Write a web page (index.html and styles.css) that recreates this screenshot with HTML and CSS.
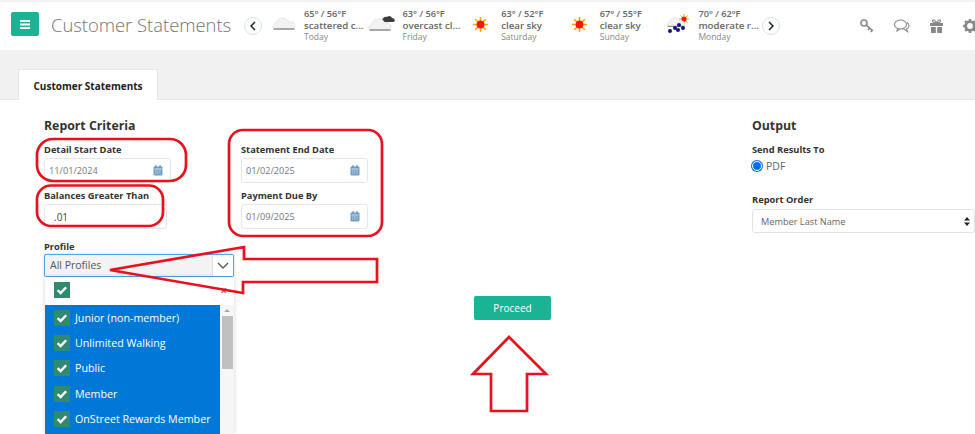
FILE: index.html
```html
<!DOCTYPE html>
<html lang="en">
<head>
<meta charset="utf-8">
<title>Customer Statements</title>
<link rel="stylesheet" href="styles.css">
</head>
<body>
<svg width="0" height="0" class="defs">
  <defs>
    <symbol id="sun" viewBox="0 0 16 16">
      <g stroke="#ffa000" stroke-width="1.6">
        <path d="M8 0v4M8 12v4M0 8h4M12 8h4M2.3 2.3l2.8 2.8M10.9 10.9l2.8 2.8M13.7 2.3l-2.8 2.8M5.1 10.9l-2.8 2.8"/>
      </g>
      <circle cx="8" cy="8" r="4.2" fill="#f01a0a"/>
    </symbol>
    <symbol id="cloud" viewBox="0 0 24 14">
      <path d="M3 12c-3 0-3-5 .5-5C4 3 8 1 11 1c3 0 5 2 6 4 3-1 6 1 6 4 0 2-1 3-3 3z" fill="#f2f2f2" stroke="#dedede" stroke-width=".7"/>
      <path d="M2 12h20" stroke="#8f8f8f" stroke-width="1.6" stroke-linecap="round"/>
    </symbol>
    <symbol id="cal" viewBox="0 0 10 11">
      <rect x=".5" y="1.5" width="9" height="9" rx="1" fill="#6f9fc4"/>
      <path d="M1.5 4h7" stroke="#fff" stroke-width=".7"/>
      <path d="M2 6h6M2 8h6" stroke="#c8dcea" stroke-width=".9" stroke-dasharray="1.2 .6"/>
      <path d="M3 0v2.4M7 0v2.4" stroke="#4f7fa5" stroke-width="1"/>
    </symbol>
    <symbol id="chk" viewBox="0 0 15 15">
      <rect width="15" height="15" fill="#2f8a70"/>
      <path d="M3.4 7.6l2.8 2.7 5.2-5.4" fill="none" stroke="#fff" stroke-width="2.2"/>
    </symbol>
  </defs>
</svg>

<header class="topbar">
  <button class="menu-btn" type="button" aria-label="Menu">
    <svg width="10" height="9" viewBox="0 0 10 9"><path d="M0 1h10M0 4.500h10M0 8h10" stroke="#fff" stroke-width="1.800"/></svg>
  </button>
  <h1 class="page-title">Customer Statements</h1>
  <span class="circle-btn"><svg width="6" height="10" viewBox="0 0 6 10"><path d="M5 1L1 5l4 4" fill="none" stroke="#222" stroke-width="1.500"/></svg></span>
  <div class="weather">
    <div class="wx">
      <span class="wx-icon"><svg width="24" height="14"><use href="#cloud"/></svg></span>
      <div class="wx-text"><div class="wx-temp">65° / 56°F</div><div class="wx-desc">scattered c...</div><div class="wx-day">Today</div></div>
    </div>
    <div class="wx">
      <span class="wx-icon"><svg width="29" height="18" viewBox="0 0 29 18"><path d="M14 6c0-3 3-5 5-4 2-2 4-1 5 1 3 0 4 4 1 4h-9c-1 0-2 0-2-1z" fill="#3d3d3d"/><use href="#cloud" x="0" y="3" width="24" height="14"/></svg></span>
      <div class="wx-text"><div class="wx-temp">63° / 56°F</div><div class="wx-desc">overcast cl...</div><div class="wx-day">Friday</div></div>
    </div>
    <div class="wx">
      <span class="wx-icon"><svg width="15" height="15"><use href="#sun"/></svg></span>
      <div class="wx-text"><div class="wx-temp">63° / 52°F</div><div class="wx-desc">clear sky</div><div class="wx-day">Saturday</div></div>
    </div>
    <div class="wx">
      <span class="wx-icon"><svg width="15" height="15"><use href="#sun"/></svg></span>
      <div class="wx-text"><div class="wx-temp">67° / 55°F</div><div class="wx-desc">clear sky</div><div class="wx-day">Sunday</div></div>
    </div>
    <div class="wx">
      <span class="wx-icon"><svg width="25" height="20" viewBox="0 0 25 20"><use href="#sun" x="14" y="0" width="10" height="10"/><use href="#cloud" x="0" y="3" width="22" height="11"/><g fill="#12128c"><circle cx="5" cy="17" r="2"/><circle cx="10" cy="14" r="2"/><circle cx="14" cy="11" r="2"/><circle cx="13" cy="16" r="2"/><circle cx="18" cy="14" r="2"/></g></svg></span>
      <div class="wx-text"><div class="wx-temp">70° / 62°F</div><div class="wx-desc">moderate r...</div><div class="wx-day">Monday</div></div>
    </div>
  </div>
  <span class="circle-btn"><svg width="6" height="10" viewBox="0 0 6 10"><path d="M1 1l4 4-4 4" fill="none" stroke="#222" stroke-width="1.500"/></svg></span>
  <div class="tools">
    <svg width="14" height="14" viewBox="0 0 14 14" fill="none" stroke="#888" stroke-width="1.600"><circle cx="4" cy="4" r="3"/><path d="M6.200 6.200l6.800 5.800M9.500 9.200l-1.500 1.800M12 11.400l-1.300 1.500"/></svg>
    <svg width="16" height="14" viewBox="0 0 16 14" fill="none" stroke="#888" stroke-width="1.100"><ellipse cx="6.500" cy="5.500" rx="6" ry="4.500"/><path d="M3.500 9.500L3 12l3-2.200"/><path d="M13 3.500c3 2 2.500 5.500-.5 6.500l1 2.500-3.500-2.500H8"/></svg>
    <svg width="13" height="14" viewBox="0 0 13 14" fill="#888"><rect x="0" y="4" width="13" height="3"/><rect x="1" y="8" width="4.800" height="6"/><rect x="7.200" y="8" width="4.800" height="6"/><path d="M6.500 4C5 .5 2.500 0 2.500 2c0 1.500 2 2 4 2zm0 0c1.500-3.500 4-4 4-2 0 1.500-2 2-4 2z" fill="none" stroke="#888" stroke-width="1.200"/></svg>
    <svg width="14" height="14" viewBox="0 0 14 14"><circle cx="7" cy="7" r="4.300" fill="none" stroke="#888" stroke-width="2.800"/><path d="M7 0v14M0 7h14M2 2l10 10M12 2L2 12" stroke="#888" stroke-width="2.400" stroke-dasharray="2.400 9.200"/></svg>
  </div>
</header>

<nav class="tabbar"><div class="tab">Customer Statements</div></nav>

<main class="content">
  <section class="col-left">
    <h2 class="section-title">Report Criteria</h2>
    <div class="field">
      <label class="lbl">Detail Start Date</label>
      <div class="input w-127"><span>11/01/2024</span><svg width="10" height="11"><use href="#cal"/></svg></div>
    </div>
    <div class="field">
      <label class="lbl">Balances Greater Than</label>
      <div class="input w-123 num"><span>.01</span></div>
    </div>
    <div class="field profile">
      <label class="lbl">Profile</label>
      <div class="combo"><span class="combo-val">All Profiles</span><span class="combo-arrow"><svg width="12" height="7" viewBox="0 0 12 7"><path d="M1 1l5 5 5-5" fill="none" stroke="#555" stroke-width="1.300"/></svg></span></div>
      <div class="dropdown">
        <div class="dd-head"><svg width="16" height="16"><use href="#chk"/></svg><span class="dd-close">×</span></div>
        <div class="dd-body">
          <ul class="dd-list">
            <li><svg width="16" height="16"><use href="#chk"/></svg>Junior (non-member)</li>
            <li><svg width="16" height="16"><use href="#chk"/></svg>Unlimited Walking</li>
            <li><svg width="16" height="16"><use href="#chk"/></svg>Public</li>
            <li><svg width="16" height="16"><use href="#chk"/></svg>Member</li>
            <li><svg width="16" height="16"><use href="#chk"/></svg>OnStreet Rewards Member</li>
          </ul>
          <div class="dd-scroll"><span class="dd-up"></span><span class="dd-thumb"></span></div>
        </div>
      </div>
    </div>
  </section>

  <section class="col-mid">
    <div class="field">
      <label class="lbl">Statement End Date</label>
      <div class="input w-127"><span>01/02/2025</span><svg width="10" height="11"><use href="#cal"/></svg></div>
    </div>
    <div class="field">
      <label class="lbl">Payment Due By</label>
      <div class="input w-127"><span>01/09/2025</span><svg width="10" height="11"><use href="#cal"/></svg></div>
    </div>
  </section>

  <section class="col-action">
    <button class="proceed" type="button">Proceed</button>
  </section>

  <section class="col-output">
    <h2 class="section-title">Output</h2>
    <label class="lbl">Send Results To</label>
    <div class="radio-row"><span class="radio"></span>PDF</div>
    <label class="lbl order-lbl">Report Order</label>
    <div class="select"><span>Member Last Name</span><svg width="6" height="9" viewBox="0 0 6 9"><path d="M3 0l3 3.500H0zM3 9L0 5.500h6z" fill="#222"/></svg></div>
  </section>
</main>

<svg class="marks" width="975" height="434" viewBox="0 0 975 434" fill="none" stroke="#e8111c" stroke-width="2.700">
  <rect x="37" y="139" width="149" height="42" rx="16"/>
  <rect x="37" y="185.500" width="126" height="40.500" rx="14"/>
  <rect x="229" y="130" width="153" height="106" rx="14"/>
  <path d="M110 270L244 247V259H377V282H243V293Z"/>
  <path d="M509 337L546 374H527V411H491V374H473Z"/>
</svg>
</body>
</html>
```
FILE: styles.css
```css
* { box-sizing: border-box; }
html, body { margin: 0; padding: 0; }
body {
  width: 975px;
  height: 434px;
  overflow: hidden;
  position: relative;
  background: #fff;
  font-family: "Open Sans", "Noto Sans", sans-serif;
  color: #333;
}
.defs { position: absolute; }

.topbar {
  margin-top: 2px;
  height: 48px;
  background: #fff;
  display: flex;
  align-items: center;
  padding-left: 11px;
  box-shadow: 0 -2px 0 #f3f3f3;
}
.topbar > * { flex: none; }
.menu-btn {
  width: 28px;
  height: 24px;
  padding: 0;
  border: 0;
  border-radius: 2px;
  margin-bottom: 4px;
  background: #1ab394;
  display: flex;
  align-items: center;
  justify-content: center;
}
.page-title {
  margin: 0 12px 4px 12px;
  width: 181px;
  font-size: 18.400px;
  font-weight: 300;
  color: #757575;
  white-space: nowrap;
}
.circle-btn {
  width: 18px;
  height: 18px;
  border: 1px solid #d5dfe8;
  border-radius: 50%;
  background: #fff;
  display: flex;
  align-items: center;
  justify-content: center;
  position: relative;
  z-index: 1;
}
.weather {
  display: flex;
  width: 493px;
  margin: 0 -2px 4px 9px;
}
.wx { width: 98.600px; flex: none; display: flex; align-items: center; }
.wx-icon { width: 25px; margin-right: 8px; flex: none; display: flex; justify-content: center; }
.wx-icon svg { display: block; flex: none; }
.wx-text { width: 60px; }
.wx-temp { font-size: 9.200px; font-weight: 600; color: #666; white-space: nowrap; line-height: 13px; }
.wx-desc { font-size: 9.700px; font-weight: 600; color: #666; white-space: nowrap; line-height: 12px; }
.wx-day { font-size: 8.500px; color: #888; line-height: 9px; }
.tools {
  margin-left: 80px;
  display: flex;
  align-items: center;
  gap: 20px;
}
.tools svg { display: block; flex: none; }

.tabbar {
  height: 50px;
  background: #f1f1f1;
  padding: 19px 0 0 18px;
  border-bottom: 1px solid #e4e6ea;
}
.tab {
  width: 140px;
  height: 31px;
  background: #fff;
  border: 1px solid #e6e7eb;
  border-bottom: 0;
  border-radius: 2px 2px 0 0;
  font-size: 10px;
  font-weight: 700;
  color: #222;
  text-align: center;
  line-height: 33px;
}

.content {
  display: grid;
  grid-template-columns: 197px 233px 278px 1fr;
  padding-left: 44px;
  height: 334px;
  overflow: hidden;
}
.section-title {
  margin: 17px 0 7px;
  height: 17px;
  font-size: 12.300px;
  font-weight: 700;
  line-height: 17px;
  color: #333;
}
.lbl {
  display: block;
  height: 17px;
  font-size: 9.300px;
  font-weight: 700;
  line-height: 17px;
  color: #333;
}
.field { margin-bottom: 4px; }
.input {
  height: 25px;
  border: 1px solid #e4e6ea;
  border-radius: 3px;
  padding: 0 7px 0 4px;
  font-size: 9.200px;
  color: #777;
  display: flex;
  align-items: center;
  justify-content: space-between;
}
.w-127 { width: 127px; }
.w-123 { width: 123px; }
.num { padding-left: 9px; color: #444; font-size: 10px; }
.profile { margin-top: 9px; margin-bottom: 0; }
.profile .lbl { height: 16px; }
.combo {
  width: 190px;
  height: 23px;
  border: 1px solid #4da6f0;
  box-shadow: 0 0 2px #8cc4ef;
  border-radius: 2px;
  background: #f3f3f3;
  display: flex;
  font-size: 10.500px;
  color: #555;
}
.combo-val { flex: 1; padding-left: 5px; line-height: 21px; }
.combo-arrow {
  width: 21px;
  background: #fff;
  border-left: 1px solid #ddd;
  display: flex;
  align-items: center;
  justify-content: center;
}
.dropdown {
  width: 189px;
  margin-left: 1px;
  background: #fff;
  box-shadow: 0 0 4px rgba(0, 0, 0, .18);
}
.dd-head {
  height: 28px;
  display: flex;
  align-items: flex-start;
  justify-content: space-between;
  padding: 5px 7px 0 9px;
}
.dd-close { font-size: 12px; font-weight: 700; line-height: 12px; color: #777; margin-top: 3px; }
.dd-head svg, .dd-list svg { display: block; flex: none; }
.dd-body { display: flex; height: 129px; }
.dd-list {
  list-style: none;
  margin: 0;
  padding: 0 0 0 9px;
  width: 175px;
  background: #0078d7;
  color: #fff;
  font-size: 10.700px;
}
.dd-list li {
  height: 25.300px;
  display: flex;
  align-items: center;
  gap: 5px;
  white-space: nowrap;
}
.dd-scroll {
  width: 14px;
  background: #f6f6f6;
  display: flex;
  flex-direction: column;
  align-items: center;
  padding-top: 4px;
}
.dd-up {
  width: 0;
  height: 0;
  border: 3px solid transparent;
  border-top: 0;
  border-bottom: 3px solid #aaa;
}
.dd-thumb { width: 11px; height: 53px; margin-top: 4px; background: #c0c0c0; }

.col-mid { padding-top: 41px; }
.col-action { padding-top: 196px; }
.proceed {
  display: block;
  width: 77px;
  height: 24px;
  padding: 0;
  border: 0;
  border-radius: 2px;
  background: #1ab394;
  color: #fff;
  font-family: inherit;
  font-size: 10px;
  font-weight: 400;
}
.col-output { min-width: 0; }
.radio-row {
  display: flex;
  align-items: center;
  gap: 4px;
  height: 15px;
  font-size: 10.500px;
  color: #666;
}
.radio {
  width: 10px;
  height: 10px;
  border-radius: 50%;
  background: #0a6cf0;
  border: 1.500px solid #fff;
  box-shadow: 0 0 0 1px #0a6cf0;
}
.order-lbl { margin-top: 18px; }
.select {
  width: 223px;
  height: 24px;
  border: 1px solid #e0e2e6;
  border-radius: 3px;
  margin-top: 1px;
  padding: 0 4px 0 8px;
  font-size: 9.200px;
  color: #666;
  display: flex;
  align-items: center;
  justify-content: space-between;
}

.marks { position: absolute; left: 0; top: 0; pointer-events: none; }
```
